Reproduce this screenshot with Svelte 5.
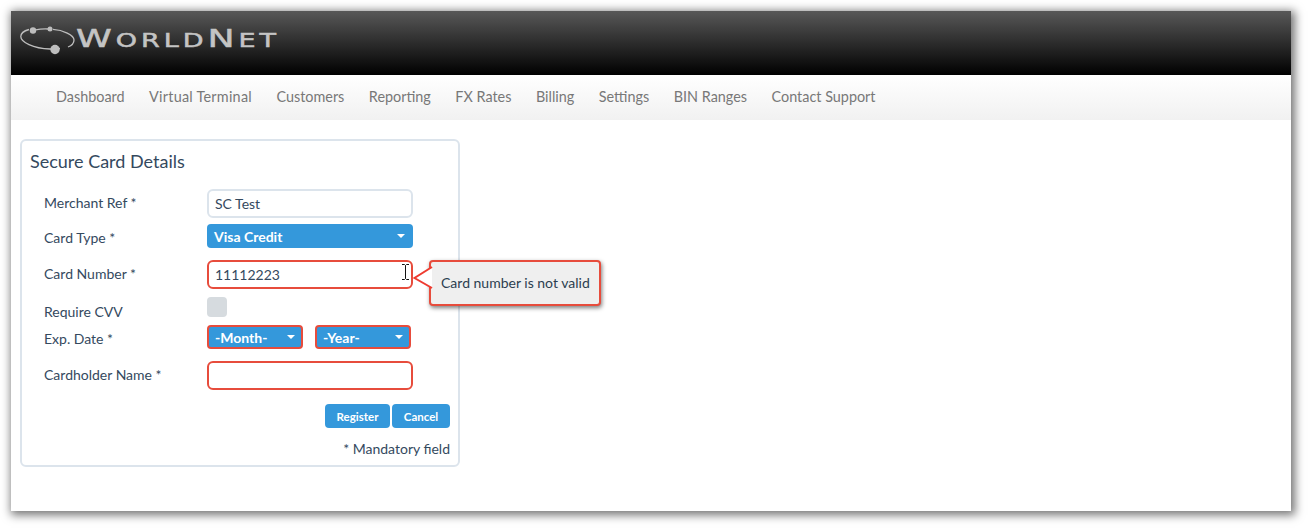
<script>
	const links = ["Dashboard", "Virtual Terminal", "Customers", "Reporting", "FX Rates", "Billing", "Settings", "BIN Ranges", "Contact Support"];
</script>

<div class="page">
<main class="window">
	<header class="brand">
		<svg class="orbit" width="58" height="32" viewBox="0 0 58 32">
			<path d="M9 6.500C3.500 8 .8 10.500 .8 13.500C.8 19 13 25.500 30 26C34 26 37 25.800 40 25.300M48 24C52 22.500 54 20 54 17C54 12 43 7 33 6.400" fill="none" stroke="#bdbdbd" stroke-width="1.300"/>
			<path d="M15.500 6.800C20 6 24 5.800 28 6" fill="none" stroke="#bdbdbd" stroke-width="1.300"/>
			<circle cx="13" cy="7.500" r="3.200" fill="#bdbdbd"/>
			<circle cx="30" cy="6" r="2.500" fill="#bdbdbd"/>
			<circle cx="35" cy="26.500" r="4.700" fill="#bdbdbd"/>
		</svg>
		<span class="logo">W<small>ORLD</small>N<small>ET</small></span>
	</header>

	<nav>
		{#each links as link}
			<a href="#top">{link}</a>
		{/each}
	</nav>

	<section class="panel">
		<h2>Secure Card Details</h2>
		<form>
			<div class="row r1">
				<span class="lbl">Merchant Ref *</span>
				<input class="field" value="SC Test" />
			</div>
			<div class="row r2">
				<span class="lbl">Card Type *</span>
				<div class="select wide"><span>Visa Credit</span><i></i></div>
			</div>
			<div class="row r3">
				<span class="lbl">Card Number *</span>
				<div class="wrap">
					<input class="field bad" value="11112223" />
					<svg class="cursor" width="9" height="18" viewBox="0 0 9 18">
						<path d="M1 1.500H3.500L4.500 2.500L5.500 1.500H8M4.500 2.500V15.500M1 16.500H3.500L4.500 15.500L5.500 16.500H8" fill="none" stroke="#111" stroke-width="1"/>
					</svg>
					<div class="tip">
						<svg class="tail" width="20" height="30" viewBox="0 0 20 30">
							<path d="M19 6L1.500 17L19 27" fill="#fff" stroke="#ee3b30" stroke-width="2"/>
						</svg>
						Card number is not valid
					</div>
				</div>
			</div>
			<div class="row r4">
				<span class="lbl">Require CVV</span>
				<span class="check"></span>
			</div>
			<div class="row r5">
				<span class="lbl">Exp. Date *</span>
				<div class="dates">
					<div class="select month err"><span>-Month-</span><i></i></div>
					<div class="select year err"><span>-Year-</span><i></i></div>
				</div>
			</div>
			<div class="row r6">
				<span class="lbl">Cardholder Name *</span>
				<input class="field bad" value="" />
			</div>
			<div class="actions">
				<button type="button" class="reg">Register</button>
				<button type="button" class="can">Cancel</button>
			</div>
			<p class="note">* Mandatory field</p>
		</form>
	</section>
</main>
</div>

<style>
:global(body) {
	margin: 0;
	background: #fff;
}

.page {
	box-sizing: border-box;
	height: 530px;
	padding: 11px 0 0 11px;
}

.window {
	box-sizing: border-box;
	width: 1280px;
	height: 500px;
	background: #fff;
	font-family: "Lato", sans-serif;
	color: #34495e;
	box-shadow: 2px 2px 9px 2px rgba(0, 0, 0, 0.55);
	overflow: hidden;
}

.brand {
	display: flex;
	align-items: flex-start;
	height: 64px;
	padding: 11px 0 0 9px;
	box-sizing: border-box;
	background: linear-gradient(#585858, #000);
}

.orbit {
	flex: none;
	margin-top: 1px;
}

.logo {
	margin: 1px 0 0 -2px;
	font-family: "DejaVu Sans", sans-serif;
	font-weight: 400;
	font-size: 25.500px;
	line-height: 30px;
	color: #c4c4c4;
	letter-spacing: 2.800px;
	-webkit-text-stroke: 0.500px #c4c4c4;
	transform: scaleX(1.420);
	transform-origin: left;
	white-space: nowrap;
}

.logo small {
	font-size: 19px;
	letter-spacing: 2.800px;
}

nav {
	display: flex;
	gap: 24.500px;
	height: 45px;
	padding: 13px 0 0 45px;
	box-sizing: border-box;
	background: linear-gradient(#fff, #f1f1f1);
	font-size: 14.400px;
	line-height: 18px;
}

nav a {
	color: #787878;
	text-decoration: none;
}

nav a:nth-child(2) {
	letter-spacing: 0.250px;
}

.panel {
	box-sizing: border-box;
	width: 440px;
	height: 328px;
	margin: 19px 0 0 9px;
	padding: 9px 8px 0 8px;
	border: 2px solid #dce4ec;
	border-radius: 6px;
}

h2 {
	margin: 0 0 17px;
	font-size: 18px;
	font-weight: 400;
	line-height: 22px;
	color: #34495e;
}

form {
	display: flex;
	flex-direction: column;
}

.row {
	display: flex;
	align-items: flex-start;
	padding-left: 14px;
	font-size: 14px;
}

.lbl {
	flex: none;
	width: 163px;
	line-height: 18px;
}

.r1 { height: 35px; }
.r2 { height: 36px; }
.r3 { height: 37px; }
.r4 { height: 28px; }
.r5 { height: 36px; }
.r6 { height: 43px; }

.r1 .lbl { margin-top: 5px; }
.r2 .lbl { margin-top: 5px; }
.r3 .lbl { margin-top: 5px; }
.r4 .lbl { margin-top: 6px; }
.r5 .lbl { margin-top: 5px; }
.r6 .lbl { margin-top: 5px; }

.field {
	box-sizing: border-box;
	display: block;
	width: 206px;
	height: 29px;
	padding: 0 6px;
	border: 2px solid #dce4ec;
	border-radius: 6px;
	background: #fff;
	outline: none;
	font-family: inherit;
	font-size: 14px;
	color: #34495e;
}

.field.bad {
	border-color: #e74c3c;
}

.wrap {
	position: relative;
}

.cursor {
	position: absolute;
	left: 194px;
	top: 3px;
}

.tip {
	position: absolute;
	left: 222px;
	top: 0;
	box-sizing: border-box;
	width: 172px;
	height: 46px;
	padding: 12px 0 0 10px;
	border: 2px solid #e74c3c;
	border-radius: 4px;
	background: #efefef;
	box-shadow: 1px 2px 4px rgba(0, 0, 0, 0.5);
	color: #2c3e50;
	line-height: 18px;
	white-space: nowrap;
}

.tail {
	position: absolute;
	left: -18px;
	top: -1px;
}

.select {
	position: relative;
	box-sizing: border-box;
	height: 24px;
	padding-left: 7px;
	border-radius: 4px;
	background: #3498db;
	color: #fff;
	font-size: 14px;
	font-weight: 700;
	line-height: 26px;
}

.select i {
	position: absolute;
	right: 8px;
	top: 10px;
	border: 4px solid transparent;
	border-top: 4px solid #fff;
	border-bottom: 0;
}

.wide {
	width: 206px;
}

.dates {
	display: flex;
	gap: 12px;
}

.err {
	border: 2px solid #e74c3c;
	line-height: 22px;
	padding-left: 6px;
}

.err i {
	top: 8px;
	right: 6px;
}

.month { width: 96px; }
.year { width: 96px; }

.check {
	width: 20px;
	height: 20px;
	border-radius: 4px;
	background: #d6dbdf;
}

.actions {
	display: flex;
	justify-content: flex-end;
	gap: 2px;
}

button {
	height: 24px;
	padding: 0;
	border: 0;
	border-radius: 4px;
	background: #3498db;
	color: #fff;
	font-family: inherit;
	font-size: 11.500px;
	font-weight: 700;
}

.reg { width: 65px; }
.can { width: 58px; }

.note {
	margin: 12px 0 0;
	text-align: right;
	font-size: 14px;
	line-height: 18px;
}
</style>
